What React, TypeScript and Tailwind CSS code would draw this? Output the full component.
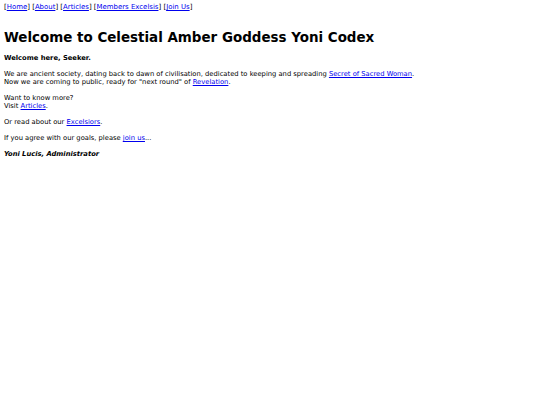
const links = ["Home", "About", "Articles", "Members Excelsis", "Join Us"];

const A = ({ children }: { children: React.ReactNode }) => (
  <a href="#" className="text-[#0000ee] underline">
    {children}
  </a>
);

export default function App() {
  return (
    <div className="min-h-[405px] bg-white px-[4px] pt-[3px] font-['DejaVu_Sans',sans-serif] text-[6.76px] leading-[8px] text-black">
      <div className="text-[6.95px]">
        {links.map((l, i) => (
          <span key={l}>
            [<A>{l}</A>]{i < links.length - 1 ? " " : ""}
          </span>
        ))}
      </div>

      <h1 className="mt-[19px] mb-[8px] text-[13.45px] leading-[16px] font-bold">
        Welcome to Celestial Amber Goddess Yoni Codex
      </h1>

      <p className="font-bold">Welcome here, Seeker.</p>

      <p className="mt-[8px]">
        We are ancient society, dating back to dawn of civilisation, dedicated to keeping and spreading{" "}
        <A>Secret of Sacred Woman</A>.
        <br />
        Now we are coming to public, ready for "next round" of <A>Revelation</A>.
      </p>

      <p className="mt-[8px]">
        Want to know more?
        <br />
        Visit <A>Articles</A>.
      </p>

      <p className="mt-[8px]">
        Or read about our <A>Excelsiors</A>.
      </p>

      <p className="mt-[8px]">
        If you agree with our goals, please <A>join us</A>...
      </p>

      <p className="mt-[8px] font-bold italic">Yoni Lucis, Administrator</p>
    </div>
  );
}
